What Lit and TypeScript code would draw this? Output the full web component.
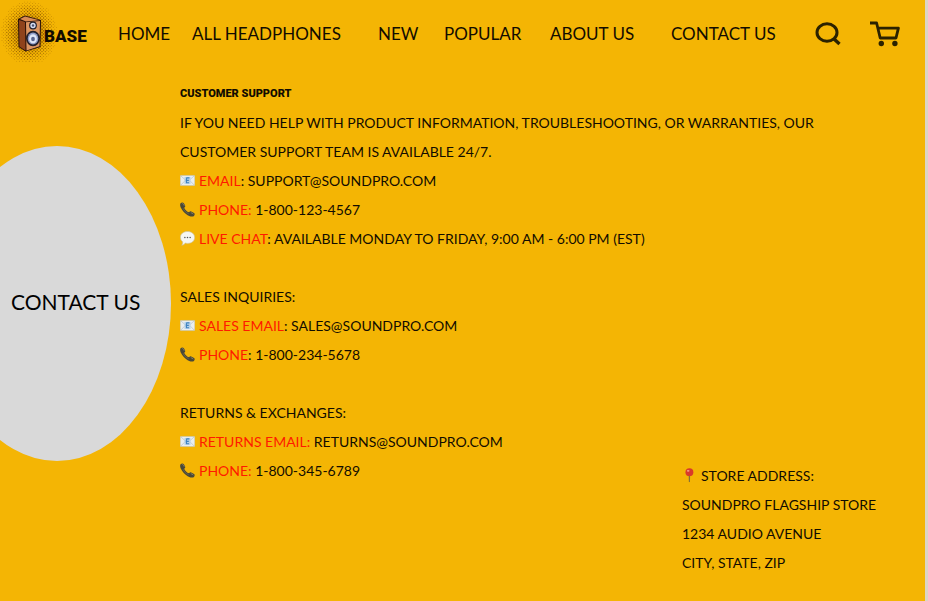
import { LitElement, html, svg, css } from "lit";
import { customElement } from "lit/decorators.js";

interface ContactLine {
  icon: "mail" | "phone" | "chat";
  label: string;
  redColon?: boolean;
  value: string;
  href?: string;
}

interface ContactGroup {
  title: string;
  display?: boolean;
  intro?: string;
  lines: ContactLine[];
}

const NAV = ["HOME", "ALL HEADPHONES", "NEW", "POPULAR", "ABOUT US", "CONTACT US"];

const GROUPS: ContactGroup[] = [
  {
    title: "CUSTOMER SUPPORT",
    display: true,
    intro:
      "IF YOU NEED HELP WITH PRODUCT INFORMATION, TROUBLESHOOTING, OR WARRANTIES, OUR CUSTOMER SUPPORT TEAM IS AVAILABLE 24/7.",
    lines: [
      { icon: "mail", label: "EMAIL", value: "SUPPORT@SOUNDPRO.COM", href: "mailto:support@soundpro.com" },
      { icon: "phone", label: "PHONE", redColon: true, value: "1-800-123-4567", href: "tel:18001234567" },
      { icon: "chat", label: "LIVE CHAT", value: "AVAILABLE MONDAY TO FRIDAY, 9:00 AM - 6:00 PM (EST)" },
    ],
  },
  {
    title: "SALES INQUIRIES:",
    lines: [
      { icon: "mail", label: "SALES EMAIL", value: "SALES@SOUNDPRO.COM", href: "mailto:sales@soundpro.com" },
      { icon: "phone", label: "PHONE", value: "1-800-234-5678", href: "tel:18002345678" },
    ],
  },
  {
    title: "RETURNS & EXCHANGES:",
    lines: [
      { icon: "mail", label: "RETURNS EMAIL", redColon: true, value: "RETURNS@SOUNDPRO.COM", href: "mailto:returns@soundpro.com" },
      { icon: "phone", label: "PHONE", redColon: true, value: "1-800-345-6789", href: "tel:18003456789" },
    ],
  },
];

const mailIcon = html`<svg class="glyph" viewBox="0 0 16 16" aria-hidden="true">
  <rect x="0.3" y="2.6" width="15.400" height="10.800" rx="0.6" fill="#e9eef0" stroke="#c3c5b4" stroke-width="0.6" />
  <path d="M0.8 12.900 6 7.6M15.2 12.900 10 7.6M0.8 3 8 9.4 15.2 3" fill="none" stroke="#b4bec5" stroke-width="0.7" />
  <rect x="4.800" y="4.2" width="6.400" height="7.400" fill="#b4d2ea" />
  <path d="M10 5.2H7.2Q6.2 7.6 7 10.4H9.6M6.8 7.8H9.4" fill="none" stroke="#3f82c0" stroke-width="1.2" />
</svg>`;

const phoneIcon = html`<svg class="glyph" viewBox="0 0 16 16" aria-hidden="true">
  <path
    d="M.6 1.4C1.600.1 3.300.1 4.200 1.400L5.500 3.900C5.900 4.900 5.300 5.600 4.500 6.100C5.200 8.200 7.400 10.300 9.700 11C10.200 10.100 11 9.600 12 10L15 11.700C16.100 12.500 15.700 14.200 14.600 15.100C12.800 16.200 9.800 15.500 6.400 12.700C2.400 9.400-1.200 4.200.6 1.400Z"
    fill="#4a4836"
  />
  <path d="M2 2.200C2.500 1.500 3.300 1.500 3.700 2.200L4.500 4M11.500 11.200 14.200 12.800" fill="none" stroke="#87846a" stroke-width="0.9" />
  <path d="M3.300 6.600C4.200 9.200 6.600 11.500 9.200 12.400" fill="none" stroke="#6c6a54" stroke-width="0.8" />
</svg>`;

const chatIcon = html`<svg class="glyph" viewBox="0 0 16 16" aria-hidden="true">
  <path
    d="M8 .5C12.500.5 15.600 3.100 15.600 6.900S12.500 13.200 8 13.200Q6.800 13.200 5.700 12.900Q4.300 14.800 1.900 15.300Q3.100 13.700 2.900 11.600Q.4 9.800.4 6.900C.4 3.100 3.500.5 8 .5Z"
    fill="#f6f6f1"
    stroke="#c9c29b"
    stroke-width="0.7"
  />
  <circle cx="5.200" cy="6.900" r="0.800" fill="#555" />
  <circle cx="8" cy="6.900" r="0.800" fill="#555" />
  <circle cx="10.800" cy="6.900" r="0.800" fill="#555" />
</svg>`;

const pinIcon = html`<svg class="glyph" viewBox="0 0 16 16" aria-hidden="true">
  <path d="M7.100 7H8.700L8.500 14 7.900 15.200 7.300 14Z" fill="#85703a" />
  <circle cx="7.900" cy="4.400" r="4.200" fill="#d93a2b" />
  <ellipse cx="6.600" cy="3" rx="1.400" ry="1" fill="#f4a08c" />
</svg>`;

const ICONS = { mail: mailIcon, phone: phoneIcon, chat: chatIcon };

/* Halftone dots that shrink away from the speaker. */
const HALFTONE = (() => {
  const dots = [];
  for (let row = 0; row < 38; row++) {
    for (let col = 0; col < 18; col++) {
      const x = 2 + col * 3.200 + (row % 2) * 1.600;
      const y = 2 + row * 1.600;
      const d = Math.hypot((x - 29) / 28, (y - 33) / 32);
      if (d < 1) dots.push({ x, y, r: Math.min(1.050, 0.300 + (1 - d) * 1.300) });
    }
  }
  return dots;
})();

@customElement("app-root")
export class AppRoot extends LitElement {
  static styles = css`
    :host {
      display: block;
      font-family: Lato, "Open Sans", sans-serif;
      font-size: 14px;
      line-height: 29px;
      color: #120c00;
    }
    * {
      box-sizing: border-box;
    }
    .page {
      min-height: 100vh;
      display: flex;
      flex-direction: column;
      overflow: hidden;
      background: #f4b504;
      border-right: 3px solid #dcd5c4;
    }
    a {
      color: inherit;
      text-decoration: none;
    }
    .header {
      display: grid;
      grid-template-columns: 118px 1fr 110px;
      align-items: center;
      height: 68px;
    }
    .logo {
      display: flex;
      align-items: center;
      font: 900 17px/24px Roboto, sans-serif;
    }
    .speaker {
      flex: none;
      width: 60px;
      height: 68px;
      margin-right: -16px;
    }
    .wordmark {
      position: relative;
      padding-top: 4px;
    }
    .nav {
      display: grid;
      grid-template-columns: 74fr 186fr 66fr 106fr 121fr 144fr;
      padding-bottom: 2px;
      font-size: 17px;
      white-space: nowrap;
    }
    .tools {
      display: flex;
      align-items: center;
      gap: 28px;
    }
    .tool {
      display: flex;
      padding: 0;
      border: 0;
      background: none;
      color: #2b2200;
    }
    .main {
      flex: 1;
      display: grid;
      grid-template-columns: 180px 1fr;
      align-items: start;
      padding: 11px 0 24px;
    }
    .badge {
      display: flex;
      align-items: center;
      width: 228px;
      height: 315px;
      margin: 67px 0 0 -57px;
      padding: 0 0 4px 68px;
      border-radius: 50%;
      background: #d9d9d9;
      font-size: 21px;
      font-weight: 400;
      color: #000;
    }
    .support {
      grid-area: 1 / 2;
      display: grid;
      gap: 29px;
    }
    .title,
    .intro,
    .list {
      margin: 0;
      padding: 0;
      font-size: 14px;
      font-weight: 400;
      list-style: none;
    }
    .display {
      font-family: Roboto, sans-serif;
      font-size: 11px;
      font-weight: 900;
    }
    .intro {
      max-width: 640px;
    }
    .line {
      display: flex;
      align-items: center;
      gap: 4px;
    }
    .glyph {
      flex: none;
      width: 15px;
      height: 15px;
    }
    .red {
      color: #ff1a00;
    }
    .address {
      grid-area: 1 / 2;
      align-self: end;
      justify-self: end;
      width: 191px;
      margin-right: 52px;
      font-style: normal;
      white-space: nowrap;
    }
  `;

  private renderLine(line: ContactLine) {
    return html`<li class="line">
      ${ICONS[line.icon]}
      <span
        ><span class="red">${line.label}${line.redColon ? ":" : ""}</span>${line.redColon ? "" : ":"}
        ${line.href ? html`<a href=${line.href}>${line.value}</a>` : line.value}</span
      >
    </li>`;
  }

  private renderGroup(group: ContactGroup) {
    return html`<section>
      <h2 class="title ${group.display ? "display" : ""}">${group.title}</h2>
      ${group.intro ? html`<p class="intro">${group.intro}</p>` : ""}
      <ul class="list">
        ${group.lines.map((line) => this.renderLine(line))}
      </ul>
    </section>`;
  }

  render() {
    return html`<div class="page">
      <header class="header">
        <a class="logo" href="#home">
          <svg class="speaker" viewBox="0 0 60 68" aria-hidden="true">
            ${HALFTONE.map((dot) => svg`<circle cx=${dot.x} cy=${dot.y} r=${dot.r} fill="#9a6200" />`)}
            <path d="M18 19 25 15.500 41 20 40.500 47 25.500 51.500 18.500 47Z" fill="#2a1208" />
            <path d="M19 20 25 22 25.500 50.500 19.500 46.500Z" fill="#8f431c" />
            <path d="M20 19 25 16.500 39.500 20.200 26 21.500Z" fill="#d98a55" />
            <path d="M26 22.300 40 21 39.500 46.200 26.500 50.500Z" fill="#dc9562" />
            <ellipse cx="33" cy="25.500" rx="3.900" ry="4" fill="#22202c" />
            <ellipse cx="33" cy="25.500" rx="2.700" ry="2.800" fill="#d6ddf2" />
            <circle cx="33" cy="25.500" r="1.200" fill="#4c5472" />
            <ellipse cx="33" cy="38.500" rx="7" ry="7.800" fill="#22202c" />
            <ellipse cx="33" cy="38.500" rx="5.300" ry="6" fill="#8e9cc8" />
            <ellipse cx="33" cy="38.800" rx="3.900" ry="4.500" fill="#dfe6f7" />
            <ellipse cx="33" cy="39" rx="1.900" ry="2.300" fill="#59648e" />
          </svg>
          <span class="wordmark">BASE</span>
        </a>
        <nav class="nav">
          ${NAV.map((name) => html`<a href="#${name.toLowerCase().replace(" ", "-")}">${name}</a>`)}
        </nav>
        <div class="tools">
          <button class="tool" aria-label="Search">
            <svg width="27" height="24" viewBox="0 0 27 24" fill="none" stroke="currentColor" stroke-width="3">
              <ellipse cx="12" cy="10.500" rx="10" ry="8.800" />
              <path d="M18.500 16.500 24.500 22" stroke-width="3.400" />
            </svg>
          </button>
          <button class="tool" aria-label="Cart">
            <svg width="30" height="26" viewBox="0 0 30 26" fill="none" stroke="currentColor" stroke-width="2.800">
              <path d="M0 2H6.600L10.200 17H26L28.400 7.200H8" stroke-linejoin="round" />
              <circle cx="11.300" cy="22.500" r="2.700" fill="currentColor" stroke="none" />
              <circle cx="24.900" cy="22.500" r="2.700" fill="currentColor" stroke="none" />
            </svg>
          </button>
        </div>
      </header>
      <main class="main">
        <h1 class="badge">CONTACT US</h1>
        <div class="support">${GROUPS.map((group) => this.renderGroup(group))}</div>
        <address class="address">
          <div class="line">${pinIcon}<span>STORE ADDRESS:</span></div>
          <div>SOUNDPRO FLAGSHIP STORE</div>
          <div>1234 AUDIO AVENUE</div>
          <div>CITY, STATE, ZIP</div>
        </address>
      </main>
    </div>`;
  }
}
